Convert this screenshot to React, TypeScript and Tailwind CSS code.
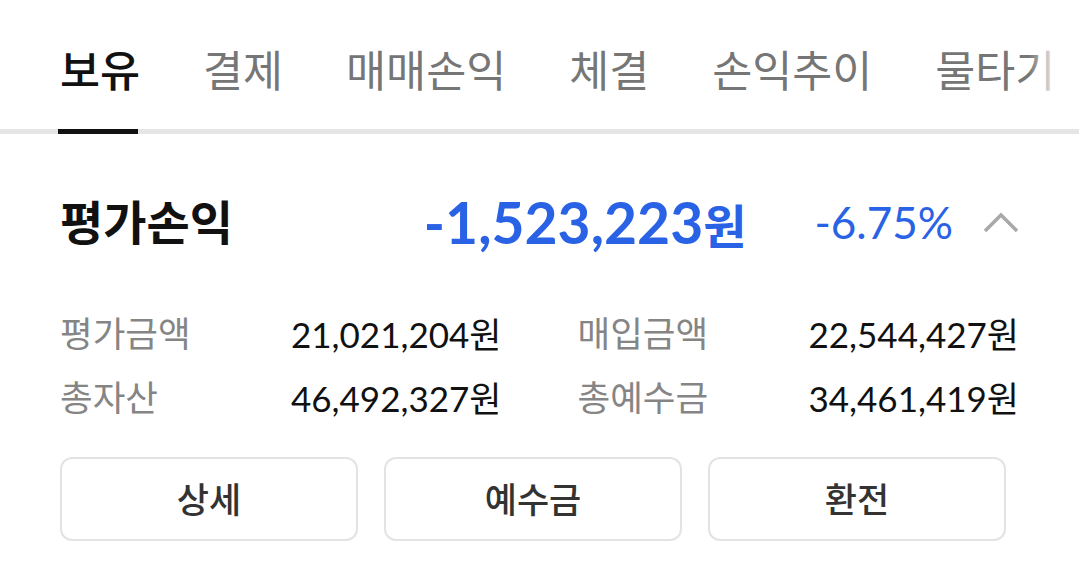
import React from "react";

const FONT = { fontFamily: "Lato, 'Noto Sans CJK KR', sans-serif" };

const tabs = ["보유", "결제", "매매손익", "체결", "손익추이", "물타기"];

function Stat({ label, value }: { label: string; value: string }) {
  return (
    <div className="flex h-[64px] items-center justify-between">
      <span className="text-[35.5px] leading-none text-[#858585]">{label}</span>
      <span className="text-[35px] leading-none text-[#111]">{value}</span>
    </div>
  );
}

export default function App() {
  return (
    <div className="h-[585px] w-[1079px] overflow-hidden bg-white" style={FONT}>
      {/* Tabs */}
      <div className="relative">
        <div className="flex h-[129px] items-start gap-[63px] overflow-hidden whitespace-nowrap pl-[60px] pt-[49px]">
          {tabs.map((t, i) => (
            <div key={t} className="relative flex shrink-0 flex-col">
              <span
                className={
                  "text-[43.5px] leading-none " +
                  (i === 0 ? "font-medium text-[#111]" : "text-[#767676]")
                }
              >
                {t}
              </span>
            </div>
          ))}
        </div>
        <div className="pointer-events-none absolute right-0 top-0 h-[129px] w-[50px] bg-gradient-to-r from-white/0 to-white to-60%" />
        <div className="relative h-[5px] bg-[#e5e5e5]">
          <div className="absolute left-[58px] top-0 h-[5px] w-[80px] bg-[#111]" />
        </div>
      </div>

      {/* Header */}
      <div className="mt-[44px] flex h-[88px] items-center justify-between px-[60px]">
        <span className="text-[47px] font-bold leading-none text-[#111]">평가손익</span>
        <div className="flex items-center">
          <span className="flex items-baseline font-bold leading-none text-[#2a62e6]">
            <span className="text-[57px]">-1,523,223</span>
            <span className="text-[47px]">원</span>
          </span>
          <span className="ml-[68px] text-[44px] leading-none text-[#2a62e6]">-6.75%</span>
          <svg
            className="ml-[30px]"
            width="36"
            height="36"
            viewBox="0 0 36 36"
            fill="none"
          >
            <polyline
              points="2,27 18,11 34,27"
              stroke="#a8a8a8"
              strokeWidth="3.5"
              fill="none"
            />
          </svg>
        </div>
      </div>

      {/* Stats */}
      <div className="mt-[36px] grid grid-cols-2 gap-x-[76px] px-[60px]">
        <Stat label="평가금액" value="21,021,204원" />
        <Stat label="매입금액" value="22,544,427원" />
        <Stat label="총자산" value="46,492,327원" />
        <Stat label="총예수금" value="34,461,419원" />
      </div>

      {/* Buttons */}
      <div className="mt-[27px] flex gap-[26px] pl-[60px] pr-[73px]">
        {["상세", "예수금", "환전"].map((b) => (
          <button
            key={b}
            className="flex h-[84px] flex-1 items-center justify-center rounded-[12px] border-2 border-[#e3e3e3] bg-white text-[35px] font-medium leading-none text-[#333]"
          >
            {b}
          </button>
        ))}
      </div>
    </div>
  );
}
